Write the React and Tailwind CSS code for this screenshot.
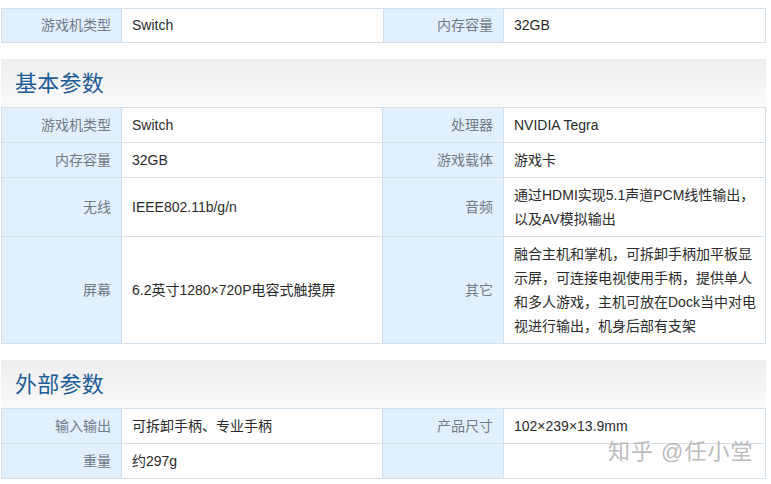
const font = { fontFamily: '"Liberation Sans", "Noto Sans CJK SC", sans-serif' }

const Row = ({ a, b, c, d, h = 'h-[35px]', first, cols = 'grid-cols-[120px_261px_121px_263px]', tall }) => (
  <div className={`grid ${cols} ${h} border-b border-[#d3e0ec] ${first ? 'border-t' : ''}`}>
    <div className="flex items-center justify-end pr-[10px] bg-[#e2effc] border-l border-[#d3e0ec] text-[#707c88]">{a}</div>
    <div className="flex items-center pl-[10px] bg-white border-l border-[#d3e0ec] text-[#2b2b2b]">{b}</div>
    <div className="flex items-center justify-end pr-[10px] bg-[#e2effc] border-l border-[#d3e0ec] text-[#707c88]">{c}</div>
    <div className={`flex items-center pl-[10px] pr-[8px] bg-white border-l border-r border-[#d3e0ec] text-[#2b2b2b] ${tall ? 'leading-[24px]' : ''}`}>{d}</div>
  </div>
)

const Title = ({ children }) => (
  <div className="h-[48px] flex items-center pl-[14px] bg-gradient-to-b from-[#eeeeee] to-[#fafafa] text-[22px] tracking-[0.25px] text-[#1f5d96]">
    {children}
  </div>
)

export default function App() {
  return (
    <div className="relative w-[771px] h-[484px] overflow-hidden bg-white text-[14px] pl-[1px] pt-[8px]" style={font}>
      <div className="w-[765px]">
        <Row first a="游戏机类型" b="Switch" c="内存容量" d="32GB" cols="grid-cols-[120px_262px_120px_263px]" />

        <div className="mt-[16px]">
          <Title>基本参数</Title>
          <Row first a="游戏机类型" b="Switch" c="处理器" d="NVIDIA Tegra" h="h-[36px]" />
          <Row a="内存容量" b="32GB" c="游戏载体" d="游戏卡" />
          <Row tall a="无线" b="IEEE802.11b/g/n" c="音频" d="通过HDMI实现5.1声道PCM线性输出，以及AV模拟输出" h="h-[59px]" />
          <Row
            tall
            a="屏幕"
            b="6.2英寸1280×720P电容式触摸屏"
            c="其它"
            d="融合主机和掌机，可拆卸手柄加平板显示屏，可连接电视使用手柄，提供单人和多人游戏，主机可放在Dock当中对电视进行输出，机身后部有支架"
            h="h-[107px]"
          />
        </div>

        <div className="mt-[16px]">
          <Title>外部参数</Title>
          <Row first a="输入输出" b="可拆卸手柄、专业手柄" c="产品尺寸" d="102×239×13.9mm" h="h-[36px]" />
          <Row a="重量" b="约297g" c="" d="" />
        </div>
      </div>

      <div className="absolute left-[608px] top-[437px] text-[22px] leading-[30px] tracking-[1px] text-[#aaaaaa]/80 whitespace-nowrap">
        知乎 @任小堂
      </div>
    </div>
  )
}
